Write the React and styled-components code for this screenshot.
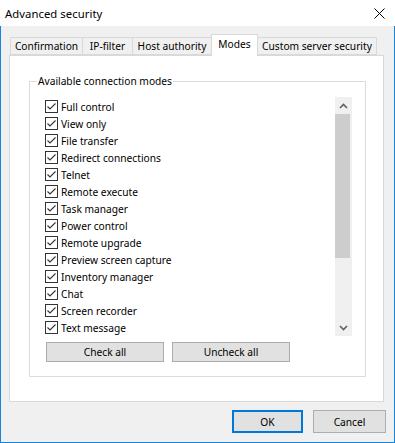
import React from "react";
import styled, { createGlobalStyle } from "styled-components";

const GlobalStyle = createGlobalStyle`
  html, body { margin: 0; padding: 0; background: #ffffff; }
  body { font-family: "Noto Sans", "Open Sans", sans-serif; }
  * { box-sizing: border-box; }
`;

const FONT = `"Noto Sans", "Open Sans", sans-serif`;

const Window = styled.div`
  width: 395px;
  height: 443px;
  display: flex;
  flex-direction: column;
  font-family: ${FONT};
  font-size: 10px;
  color: #000;
`;

const TitleBar = styled.div`
  height: 26px;
  flex: none;
  background: #ffffff;
  display: flex;
  align-items: center;
  justify-content: space-between;
  padding: 0 10px 0 5px;
`;

const Title = styled.span`
  font-size: 11.3px;
  color: #000;
  letter-spacing: 0.05px;
`;

const CloseButton = styled.div`
  width: 12px;
  height: 12px;
  display: flex;
  align-items: center;
  justify-content: center;
`;

const Body = styled.div`
  flex: 1;
  display: flex;
  flex-direction: column;
  background: #f0f0f0;
  border: 1px solid #1883d7;
  border-top: none;
`;

const TabStrip = styled.div`
  display: flex;
  align-items: flex-end;
  margin: 8px 0 0 9px;
  height: 21px;
  position: relative;
  z-index: 1;
`;

const Tab = styled.div`
  width: ${(p) => p.$w}px;
  height: ${(p) => (p.$active ? 22 : 18)}px;
  margin-bottom: ${(p) => (p.$active ? -1 : 0)}px;
  margin-left: ${(p) => (p.$first ? 0 : -1)}px;
  background: ${(p) => (p.$active ? "#ffffff" : "#f0f0f0")};
  border: 1px solid #d9d9d9;
  border-bottom: ${(p) => (p.$active ? "none" : "1px solid #d9d9d9")};
  display: flex;
  align-items: ${(p) => (p.$active ? "flex-start" : "center")};
  padding-top: ${(p) => (p.$active ? 2 : 0)}px;
  justify-content: center;
  white-space: nowrap;
  font-size: 10.2px;
  line-height: 14px;
`;

const Panel = styled.div`
  margin: 0 10px 0 8px;
  height: 347px;
  background: #ffffff;
  border: 1px solid #d9d9d9;
  padding: 18px 17px 0 19px;
`;

const Group = styled.fieldset`
  margin: 0;
  padding: 9px 13px 0 13px;
  height: 303px;
  border: 1px solid #dcdcdc;
  display: flex;
  flex-direction: column;
`;

const Legend = styled.legend`
  margin-left: -6px;
  padding: 0 1px;
  font-size: 10.2px;
  line-height: 14px;
`;

const ListBox = styled.div`
  height: 239px;
  display: flex;
  background: #ffffff;
`;

const Items = styled.div`
  flex: 1;
  display: flex;
  flex-direction: column;
  padding-top: 1px;
`;

const Row = styled.label`
  height: 17px;
  display: flex;
  align-items: center;
  padding-left: 2px;
  gap: 3px;
  font-size: 10.2px;
  white-space: nowrap;
`;

const Box = styled.span`
  width: 13px;
  height: 13px;
  border: 1px solid #333333;
  background: #ffffff;
  display: flex;
  align-items: center;
  justify-content: center;
  flex: none;
`;

const ScrollBar = styled.div`
  width: 17px;
  background: #f0f0f0;
  display: flex;
  flex-direction: column;
  flex: none;
`;

const Arrow = styled.div`
  height: 17px;
  display: flex;
  align-items: center;
  justify-content: center;
  flex: none;
`;

const Track = styled.div`
  flex: 1;
  display: flex;
  flex-direction: column;
`;

const Thumb = styled.div`
  height: 144px;
  width: 15px;
  background: #cdcdcd;
`;

const ButtonRow = styled.div`
  display: flex;
  gap: 8px;
  margin: 6px 0 0 3px;
`;

const Button = styled.button`
  width: ${(p) => p.$w}px;
  height: ${(p) => p.$h}px;
  background: #e1e1e1;
  border: ${(p) => (p.$default ? "2px solid #0078d7" : "1px solid #adadad")};
  font-family: ${FONT};
  font-size: 10.2px;
  color: #000;
  padding: 0;
  display: flex;
  align-items: center;
  justify-content: center;
`;

const Footer = styled.div`
  flex: 1;
  display: flex;
  justify-content: flex-end;
  align-items: flex-start;
  gap: 10px;
  padding: 8px 8px 0 0;
`;

const modes = [
  "Full control",
  "View only",
  "File transfer",
  "Redirect connections",
  "Telnet",
  "Remote execute",
  "Task manager",
  "Power control",
  "Remote upgrade",
  "Preview screen capture",
  "Inventory manager",
  "Chat",
  "Screen recorder",
  "Text message",
];

const tabs = [
  { label: "Confirmation", w: 73 },
  { label: "IP-filter", w: 51 },
  { label: "Host authority", w: 80 },
  { label: "Modes", w: 47, active: true },
  { label: "Custom server security", w: 120 },
];

function Check() {
  return (
    <svg width="11" height="11" viewBox="0 0 11 11">
      <polyline points="1.5,5.5 4,8 9.5,2.5" fill="none" stroke="#333" strokeWidth="1.1" />
    </svg>
  );
}

function Chevron({ down }) {
  return (
    <svg width="9" height="6" viewBox="0 0 9 6">
      <polyline
        points={down ? "1,1 4.5,4.5 8,1" : "1,5 4.5,1.5 8,5"}
        fill="none"
        stroke="#606060"
        strokeWidth="1.6"
      />
    </svg>
  );
}

export default function App() {
  return (
    <>
      <GlobalStyle />
      <Window>
        <TitleBar>
          <Title>Advanced security</Title>
          <CloseButton>
            <svg width="11" height="11" viewBox="0 0 11 11">
              <path d="M0.5 0.5 L10.5 10.5 M10.5 0.5 L0.5 10.5" stroke="#000" strokeWidth="1" />
            </svg>
          </CloseButton>
        </TitleBar>
        <Body>
          <TabStrip>
            {tabs.map((t, i) => (
              <Tab key={t.label} $w={t.w} $active={t.active} $first={i === 0}>
                {t.label}
              </Tab>
            ))}
          </TabStrip>
          <Panel>
            <Group>
              <Legend>Available connection modes</Legend>
              <ListBox>
                <Items>
                  {modes.map((m) => (
                    <Row key={m}>
                      <Box>
                        <Check />
                      </Box>
                      {m}
                    </Row>
                  ))}
                </Items>
                <ScrollBar>
                  <Arrow>
                    <Chevron />
                  </Arrow>
                  <Track>
                    <Thumb />
                  </Track>
                  <Arrow>
                    <Chevron down />
                  </Arrow>
                </ScrollBar>
              </ListBox>
              <ButtonRow>
                <Button $w={118} $h={20}>Check all</Button>
                <Button $w={118} $h={20}>Uncheck all</Button>
              </ButtonRow>
            </Group>
          </Panel>
          <Footer>
            <Button $w={71} $h={23} $default>OK</Button>
            <Button $w={73} $h={23}>Cancel</Button>
          </Footer>
        </Body>
      </Window>
    </>
  );
}
